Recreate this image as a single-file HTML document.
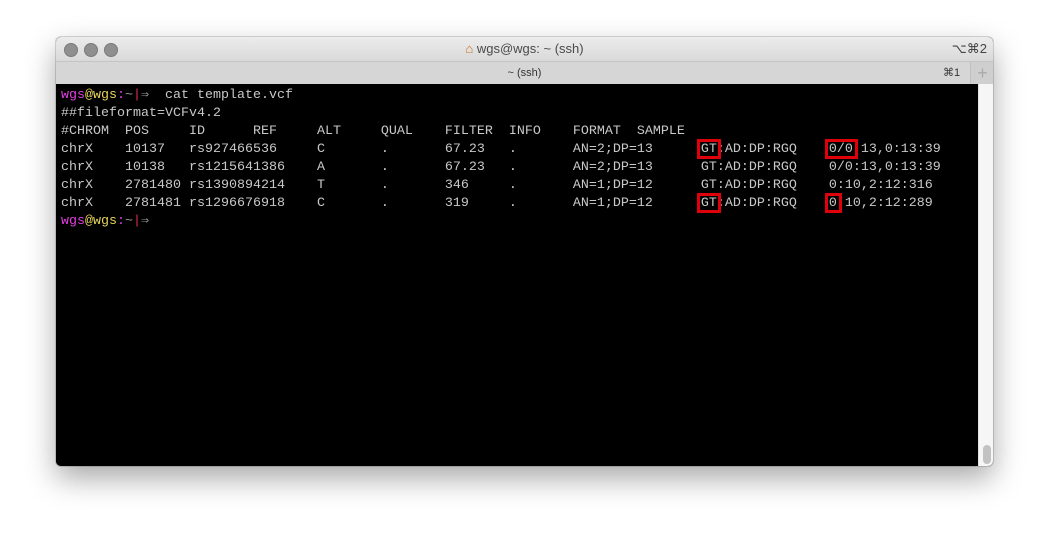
<!DOCTYPE html>
<html><head><meta charset="utf-8"><style>
body{margin:0;width:1049px;height:540px;background:#fff;position:relative;overflow:hidden;font-family:"Liberation Sans",sans-serif}
.win{position:absolute;left:56px;top:37px;width:937px;height:429px;border-radius:5px;overflow:hidden;box-shadow:0 12px 30px rgba(0,0,0,.35),0 0 0 1px rgba(0,0,0,.15);background:#000}
.title{position:absolute;left:0;top:0;width:937px;height:24px;background:linear-gradient(#ececec,#d9d9d9);border-bottom:1px solid #c4c4c4;font-size:13px;color:#4a4a4a;text-align:center;line-height:24px}
.dot{position:absolute;top:6px;width:12px;height:12px;border-radius:50%;background:#8f8f8f;border:0.5px solid #7a7a7a}
.tabs{position:absolute;left:0;top:25px;width:937px;height:22px;background:#d6d6d6;font-size:11px;color:#333;text-align:center;line-height:22px}
.term{position:absolute;left:0;top:47px;width:922px;height:382px;background:#000}
.sb{position:absolute;left:922px;top:47px;width:15px;height:382px;background:#f6f6f6;border-left:1px solid #e0e0e0}
.thumb{position:absolute;left:4px;top:361px;width:8px;height:19px;border-radius:4px;background:#c2c2c2}
pre{margin:0;position:absolute;left:5px;top:50px;font-family:"Liberation Mono",monospace;font-size:13.33px;line-height:18px;color:#c8c8c8}
.m{color:#e23ee0}.y{color:#e6d35c}.r{color:#e0304a}.g{color:#999}
.box{position:absolute;border:3px solid #e0000a}
</style></head><body>
<div class="win">
<div class="title"><span class="dot" style="left:8px"></span><span class="dot" style="left:28px"></span><span class="dot" style="left:48px"></span>
<span style="color:#c87020">&#8962;</span> wgs@wgs: ~ (ssh)<span style="position:absolute;right:6px;color:#444">⌥⌘2</span></div>
<div class="tabs">~ (ssh)<span style="position:absolute;left:887px;font-size:11px">⌘1</span><span style="position:absolute;left:914px;top:0;width:23px;height:22px;border-left:1px solid #c0c0c0;background:#cfcfcf;color:#aaa;font-size:18px">+</span></div>
<div class="term"></div>
<div class="sb"><div class="thumb"></div></div>
<pre><span class="m">wgs</span><span class="y">@wgs</span><span class="m">:</span><span class="g">~</span><span class="r">|</span><span class="g">⇒</span>  cat template.vcf
##fileformat=VCFv4.2
#CHROM  POS     ID      REF     ALT     QUAL    FILTER  INFO    FORMAT  SAMPLE
chrX    10137   rs927466536     C       .       67.23   .       AN=2;DP=13      GT:AD:DP:RGQ    0/0:13,0:13:39
chrX    10138   rs1215641386    A       .       67.23   .       AN=2;DP=13      GT:AD:DP:RGQ    0/0:13,0:13:39
chrX    2781480 rs1390894214    T       .       346     .       AN=1;DP=12      GT:AD:DP:RGQ    0:10,2:12:316
chrX    2781481 rs1296676918    C       .       319     .       AN=1;DP=12      GT:AD:DP:RGQ    0:10,2:12:289
<span class="m">wgs</span><span class="y">@wgs</span><span class="m">:</span><span class="g">~</span><span class="r">|</span><span class="g">⇒</span></pre>
</div>
<div class="box" style="left:697px;top:139px;width:18px;height:14px"></div>
<div class="box" style="left:825px;top:139px;width:27px;height:14px"></div>
<div class="box" style="left:697px;top:193px;width:18px;height:14px"></div>
<div class="box" style="left:825px;top:193px;width:11px;height:14px"></div>
</body></html>
